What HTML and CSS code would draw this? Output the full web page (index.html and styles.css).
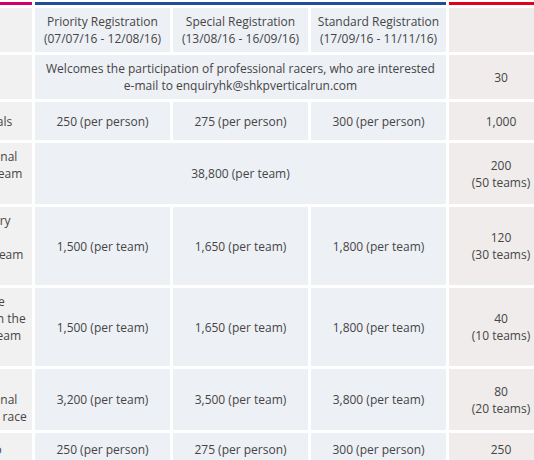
FILE: index.html
```html
<!DOCTYPE html>
<html lang="en">
<head>
<meta charset="utf-8">
<title>Registration Fees</title>
<link rel="stylesheet" href="styles.css">
</head>
<body>
<div class="wrap">
  <table class="fees">
    <colgroup>
      <col class="c-cat">
      <col class="c-reg">
      <col class="c-reg">
      <col class="c-reg">
      <col class="c-quota">
    </colgroup>
    <tr class="bars">
      <td class="bar bar-pink"></td>
      <td class="bar bar-blue" colspan="3"></td>
      <td class="bar bar-red"></td>
    </tr>
    <tr>
      <th class="cat"></th>
      <th class="reg">Priority Registration<br>(07/07/16 - 12/08/16)</th>
      <th class="reg">Special Registration<br>(13/08/16 - 16/09/16)</th>
      <th class="reg">Standard Registration<br>(17/09/16 - 11/11/16)</th>
      <th class="quota"></th>
    </tr>
    <tr>
      <td class="cat">Elite</td>
      <td class="reg" colspan="3">Welcomes the participation of professional racers, who are interested<br>e-mail to enquiryhk@shkpverticalrun.com</td>
      <td class="quota">30</td>
    </tr>
    <tr class="single">
      <td class="cat">Individuals</td>
      <td class="reg">250 (per person)</td>
      <td class="reg">275 (per person)</td>
      <td class="reg">300 (per person)</td>
      <td class="quota">1,000</td>
    </tr>
    <tr>
      <td class="cat">Educational<br>Family Team<br>(of 4)</td>
      <td class="reg" colspan="3">38,800 (per team)</td>
      <td class="quota">200<br>(50 teams)</td>
    </tr>
    <tr>
      <td class="cat">Secondary<br>Schools<br>School Team<br>(of 4)</td>
      <td class="reg">1,500 (per team)</td>
      <td class="reg">1,650 (per team)</td>
      <td class="reg">1,800 (per team)</td>
      <td class="quota">120<br>(30 teams)</td>
    </tr>
    <tr>
      <td class="cat">Executive<br>Offices in the<br>Tower Team<br>(of 4)</td>
      <td class="reg">1,500 (per team)</td>
      <td class="reg">1,650 (per team)</td>
      <td class="reg">1,800 (per team)</td>
      <td class="quota">40<br>(10 teams)</td>
    </tr>
    <tr>
      <td class="cat">Guest<br>Educational<br>Stairway race</td>
      <td class="reg">3,200 (per team)</td>
      <td class="reg">3,500 (per team)</td>
      <td class="reg">3,800 (per team)</td>
      <td class="quota">80<br>(20 teams)</td>
    </tr>
    <tr class="last">
      <td class="cat">Kids Duo</td>
      <td class="reg">250 (per person)</td>
      <td class="reg">275 (per person)</td>
      <td class="reg">300 (per person)</td>
      <td class="quota">250</td>
    </tr>
  </table>
</div>
</body>
</html>
```
FILE: styles.css
```css
html, body {
  margin: 0;
  padding: 0;
  background: #ffffff;
}

body {
  font-family: "Open Sans", "DejaVu Sans", sans-serif;
  font-size: 12px;
  line-height: 17px;
  color: #454545;
}

.wrap {
  width: 534px;
  height: 460px;
  overflow: hidden;
}

.fees {
  border-collapse: separate;
  border-spacing: 3px;
  table-layout: fixed;
  width: 612px;
  margin: -1px 0 0 -56px;
}

.c-cat { width: 85px; }
.c-reg { width: 135px; }
.c-quota { width: 104px; }

.fees th,
.fees td {
  padding: 5px;
  font-weight: normal;
  vertical-align: middle;
  text-align: center;
}

.fees .cat {
  text-align: left;
  background: #f1f1f1;
}

.fees .reg {
  background: #edf0f5;
}

.fees .quota {
  background: #efeceb;
}

.fees .bars td {
  height: 3px;
  padding: 0;
  font-size: 0;
  line-height: 0;
}

.fees .bar-pink { background: #d4006a; }
.fees .bar-blue { background: #1e4d9c; }
.fees .bar-red { background: #e2001a; }

.fees .single td {
  padding-top: 10.5px;
  padding-bottom: 10.5px;
}

.fees .last td {
  padding-top: 8px;
  padding-bottom: 8px;
}
```
